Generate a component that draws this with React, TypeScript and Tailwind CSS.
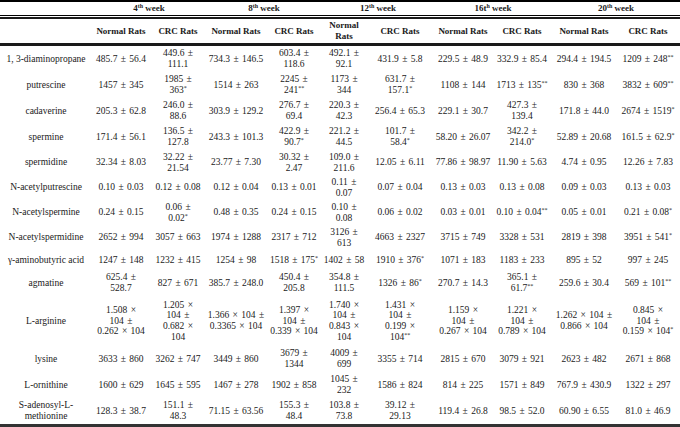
const rows: { name: string; h: string; cells: string[] }[] = [
  { name: "1, 3-diaminopropane", h: "h-[26px]", cells: ["485.7 ± 56.4", "449.6 ±|111.1", "734.3 ± 146.5", "603.4 ±|118.6", "492.1 ±|92.1", "431.9 ± 5.8", "229.5 ± 48.9", "332.9 ± 85.4", "294.4 ± 194.5", "1209 ± 248**"] },
  { name: "putrescine", h: "h-[26px]", cells: ["1457 ± 345", "1985 ±|363*", "1514 ± 263", "2245 ±|241**", "1173 ±|344", "631.7 ±|157.1*", "1108 ± 144", "1713 ± 135**", "830 ± 368", "3832 ± 609**"] },
  { name: "cadaverine", h: "h-[26px]", cells: ["205.3 ± 62.8", "246.0 ±|88.6", "303.9 ± 129.2", "276.7 ±|69.4", "220.3 ±|42.3", "256.4 ± 65.3", "229.1 ± 30.7", "427.3 ±|139.4", "171.8 ± 44.0", "2674 ± 1519*"] },
  { name: "spermine", h: "h-[26px]", cells: ["171.4 ± 56.1", "136.5 ±|127.8", "243.3 ± 101.3", "422.9 ±|90.7*", "221.2 ±|44.5", "101.7 ±|58.4*", "58.20 ± 26.07", "342.2 ±|214.0*", "52.89 ± 20.68", "161.5 ± 62.9*"] },
  { name: "spermidine", h: "h-[25px]", cells: ["32.34 ± 8.03", "32.22 ±|21.54", "23.77 ± 7.30", "30.32 ±|2.47", "109.0 ±|211.6", "12.05 ± 6.11", "77.86 ± 98.97", "11.90 ± 5.63", "4.74 ± 0.95", "12.26 ± 7.83"] },
  { name: "N-acetylputrescine", h: "h-[25px]", cells: ["0.10 ± 0.03", "0.12 ± 0.08", "0.12 ± 0.04", "0.13 ± 0.01", "0.11 ±|0.07", "0.07 ± 0.04", "0.13 ± 0.03", "0.13 ± 0.08", "0.09 ± 0.03", "0.13 ± 0.03"] },
  { name: "N-acetylspermine", h: "h-[25px]", cells: ["0.24 ± 0.15", "0.06 ±|0.02*", "0.48 ± 0.35", "0.24 ± 0.15", "0.10 ±|0.08", "0.06 ± 0.02", "0.03 ± 0.01", "0.10 ± 0.04**", "0.05 ± 0.01", "0.21 ± 0.08*"] },
  { name: "N-acetylspermidine", h: "h-[25px]", cells: ["2652 ± 994", "3057 ± 663", "1974 ± 1288", "2317 ± 712", "3126 ±|613", "4663 ± 2327", "3715 ± 749", "3328 ± 531", "2819 ± 398", "3951 ± 541*"] },
  { name: "γ-aminobutyric acid", h: "h-[20px]", cells: ["1247 ± 148", "1232 ± 415", "1254 ± 98", "1518 ± 175*", "1402 ± 58", "1910 ± 376*", "1071 ± 183", "1183 ± 233", "895 ± 52", "997 ± 245"] },
  { name: "agmatine", h: "h-[26px]", cells: ["625.4 ±|528.7", "827 ± 671", "385.7 ± 248.0", "450.4 ±|205.8", "354.8 ±|111.5", "1326 ± 86*", "270.7 ± 14.3", "365.1 ±|61.7**", "259.6 ± 30.4", "569 ± 101**"] },
  { name: "L-arginine", h: "h-[50px]", cells: ["1.508 ×|104 ±|0.262 × 104", "1.205 ×|104 ±|0.682 ×|104", "1.366 × 104 ±|0.3365 × 104", "1.397 ×|104 ±|0.339 × 104", "1.740 ×|104 ±|0.843 ×|104", "1.431 ×|104 ±|0.199 ×|104**", "1.159 ×|104 ±|0.267 × 104", "1.221 ×|104 ±|0.789 × 104", "1.262 × 104 ±|0.866 × 104", "0.845 ×|104 ±|0.159 × 104*"] },
  { name: "lysine", h: "h-[26px]", cells: ["3633 ± 860", "3262 ± 747", "3449 ± 860", "3679 ±|1344", "4009 ±|699", "3355 ± 714", "2815 ± 670", "3079 ± 921", "2623 ± 482", "2671 ± 868"] },
  { name: "L-ornithine", h: "h-[26px]", cells: ["1600 ± 629", "1645 ± 595", "1467 ± 278", "1902 ± 858", "1045 ±|232", "1586 ± 824", "814 ± 225", "1571 ± 849", "767.9 ± 430.9", "1322 ± 297"] },
  { name: "S-adenosyl-L-|methionine", h: "h-[29px]", cells: ["128.3 ± 38.7", "151.1 ±|48.3", "71.15 ± 63.56", "155.3 ±|48.4", "103.8 ±|73.8", "39.12 ±|29.13", "119.4 ± 26.8", "98.5 ± 52.0", "60.90 ± 6.55", "81.0 ± 46.9"] },
];

function Cell({ text }: { text: string }) {
  const lines = text.split("|");
  return (
    <>
      {lines.map((line, i) => {
        const m = line.match(/^(.*?)(\*+)$/);
        return (
          <div key={i}>
            {m ? m[1] : line}
            {m && <sup className="text-[6px]">{m[2]}</sup>}
          </div>
        );
      })}
    </>
  );
}

function WeekHead({ n, suf }: { n: string; suf: string }) {
  return (
    <th colSpan={2} className="border-t-2 border-b border-black p-0 text-center align-middle">
      {n}
      <sup className="text-[6px]">{suf}</sup> week
    </th>
  );
}

export default function App() {
  const sub = "border-t-2 border-b-[3px] border-[#1a1a1a] p-0 text-center align-middle";
  return (
    <div className="w-[680px] h-[427px] overflow-hidden bg-white text-[#1a1a1a] font-['Liberation_Serif','Times_New_Roman',serif]">
      <table className="w-[680px] table-fixed border-separate border-spacing-0 text-[9.5px] leading-[10.7px] [word-spacing:1px]">
        <colgroup>
          <col className="w-[92px]" />
          <col className="w-[58px]" />
          <col className="w-[56px]" />
          <col className="w-[60px]" />
          <col className="w-[56px]" />
          <col className="w-[44px]" />
          <col className="w-[68px]" />
          <col className="w-[58px]" />
          <col className="w-[60px]" />
          <col className="w-[64px]" />
          <col className="w-[64px]" />
        </colgroup>
        <thead className="font-bold text-[9px] [word-spacing:0px]">
          <tr className="h-[16px]">
            <th className="border-t-2 border-b border-black p-0" />
            <WeekHead n="4" suf="th" />
            <WeekHead n="8" suf="th" />
            <WeekHead n="12" suf="th" />
            <WeekHead n="16t" suf="h" />
            <WeekHead n="20" suf="th" />
          </tr>
          <tr className="h-px">
            <th colSpan={11} className="p-0" />
          </tr>
          <tr className="h-[29px]">
            <th className={sub} />
            <th className={sub}>Normal Rats</th>
            <th className={sub}>CRC Rats</th>
            <th className={sub}>Normal Rats</th>
            <th className={sub}>CRC Rats</th>
            <th className={sub}>
              Normal
              <br />
              Rats
            </th>
            <th className={sub}>CRC Rats</th>
            <th className={sub}>Normal Rats</th>
            <th className={sub}>CRC Rats</th>
            <th className={sub}>Normal Rats</th>
            <th className={sub}>CRC Rats</th>
          </tr>
        </thead>
        <tbody>
          {rows.map((r, ri) => {
            const last = ri === rows.length - 1;
            const td = `p-0 text-center align-middle whitespace-nowrap ${last ? "border-b-[3px] border-[#333]" : ""}`;
            return (
              <tr key={r.name} className={r.h}>
                <td className={`${td} [word-spacing:0px]`}>
                  <Cell text={r.name} />
                </td>
                {r.cells.map((c, ci) => (
                  <td key={ci} className={td}>
                    <Cell text={c} />
                  </td>
                ))}
              </tr>
            );
          })}
        </tbody>
      </table>
    </div>
  );
}
